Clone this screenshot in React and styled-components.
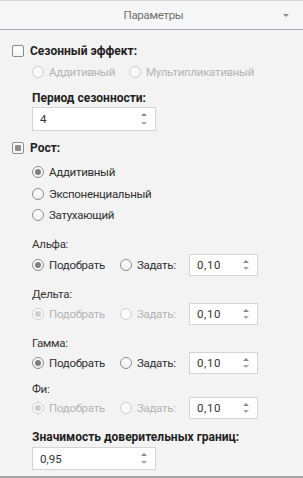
import React from "react";
import styled, { createGlobalStyle, css } from "styled-components";

const Global = createGlobalStyle`
  html, body {
    margin: 0;
    padding: 0;
    background: #f3f3f3;
  }
  body {
    font-family: Roboto, "Liberation Sans", Arial, sans-serif;
    font-size: 11.5px;
    letter-spacing: -0.3px;
    color: #333333;
  }
`;

const Panel = styled.div`
  width: 303px;
  height: 478px;
  box-sizing: border-box;
  background: #f3f3f3;
  border-bottom: 2px solid #a6a6a6;
  display: flex;
  flex-direction: column;
`;

const Header = styled.div`
  flex-shrink: 0;
  height: 28px;
  border-top: 1px solid #d6d6d6;
  border-bottom: 1px solid #aaa4bb;
  background: #f6f6f6;
  display: flex;
  align-items: center;
  justify-content: center;
  position: relative;
  color: #707070;
  padding-left: 4px;
`;

const HeaderArrow = styled.span`
  position: absolute;
  right: 14px;
  top: 13px;
  width: 0;
  height: 0;
  border-left: 3px solid transparent;
  border-right: 3px solid transparent;
  border-top: 3px solid #8a8a8a;
`;

const Body = styled.div`
  display: flex;
  flex-direction: column;
  padding: 11px 0 0 12px;
`;

const CheckRow = styled.label`
  display: flex;
  align-items: center;
  gap: 6px;
  height: 20px;
  font-size: 12px;
  letter-spacing: 0;
  font-weight: 700;
  color: #1f1f1f;
  margin-top: ${(p) => p.$top || 0}px;
`;

const Box = styled.span`
  width: 10px;
  height: 10px;
  border: 1px solid #8c8c8c;
  border-radius: 2px;
  background: linear-gradient(#ffffff, #f4f4f4);
  display: flex;
  align-items: center;
  justify-content: center;
  ${(p) =>
    p.$mixed &&
    css`
      &::after {
        content: "";
        width: 6px;
        height: 6px;
        border-radius: 1px;
        background: #8f8f8f;
      }
    `}
`;

const Indent = styled.div`
  display: flex;
  flex-direction: column;
  padding-left: 20px;
`;

const RadioLine = styled.div`
  display: flex;
  align-items: center;
  height: ${(p) => p.$h || 21}px;
  margin-top: ${(p) => p.$top || 0}px;
`;

const RadioItem = styled.label`
  display: flex;
  align-items: center;
  gap: 5px;
  color: ${(p) => (p.$disabled ? "#b3b3b3" : "#303030")};
  width: ${(p) => (p.$w ? `${p.$w}px` : "auto")};
  flex-shrink: 0;
`;

const Dot = styled.span`
  width: 10px;
  height: 10px;
  border-radius: 50%;
  border: 1px solid ${(p) => (p.$disabled ? "#cfcfcf" : "#8e8e8e")};
  background: ${(p) => (p.$disabled ? "#fafafa" : "linear-gradient(#ffffff, #f0f0f0)")};
  display: flex;
  align-items: center;
  justify-content: center;
  flex-shrink: 0;
  ${(p) =>
    p.$on &&
    css`
      &::after {
        content: "";
        width: 6px;
        height: 6px;
        border-radius: 50%;
        background: ${p.$disabled ? "#cccccc" : "#7f7f7f"};
      }
    `}
`;

const Caption = styled.div`
  height: 16px;
  line-height: 16px;
  font-size: ${(p) => (p.$bold ? "12px" : "inherit")};
  letter-spacing: ${(p) => (p.$bold ? "0" : "inherit")};
  font-weight: ${(p) => (p.$bold ? 700 : 400)};
  color: ${(p) => (p.$bold ? "#1f1f1f" : "#333333")};
  margin-top: ${(p) => p.$top || 0}px;
  margin-bottom: ${(p) => p.$bottom || 0}px;
`;

const Spin = styled.div`
  flex-shrink: 0;
  width: ${(p) => p.$w}px;
  height: ${(p) => p.$h || 22}px;
  box-sizing: border-box;
  border: 1px solid #d4d4d4;
  background: #ffffff;
  display: flex;
  align-items: center;
  padding-left: 7px;
  position: relative;
  color: #333333;
  letter-spacing: ${(p) => (p.$spaced ? "0.6px" : "0")};
`;

const Arrows = styled.span`
  position: absolute;
  right: 8px;
  top: 5px;
  bottom: 5px;
  display: flex;
  flex-direction: column;
  justify-content: space-between;
  &::before,
  &::after {
    content: "";
    width: 0;
    height: 0;
    border-left: 3px solid transparent;
    border-right: 3px solid transparent;
  }
  &::before {
    border-bottom: 3px solid #8a8a8a;
  }
  &::after {
    border-top: 3px solid #a8a8a8;
  }
`;

const ParamRow = styled.div`
  display: flex;
  align-items: center;
  height: 22px;
  margin-top: ${(p) => p.$top}px;
`;

function Radio({ on, disabled, label, w }) {
  return (
    <RadioItem $disabled={disabled} $w={w}>
      <Dot $on={on} $disabled={disabled} />
      {label}
    </RadioItem>
  );
}

function Param({ name, disabled, top, gap }) {
  return (
    <>
      <Caption $top={top}>{name}</Caption>
      <ParamRow $top={gap}>
        <Radio on disabled={disabled} label="Подобрать" w={88} />
        <Radio disabled={disabled} label="Задать:" w={69} />
        <Spin $w={69} $spaced>
          0,10
          <Arrows />
        </Spin>
      </ParamRow>
    </>
  );
}

export default function App() {
  return (
    <>
      <Global />
      <Panel>
        <Header>
          Параметры
          <HeaderArrow />
        </Header>
        <Body>
          <CheckRow>
            <Box />
            Сезонный эффект:
          </CheckRow>
          <Indent>
            <RadioLine $h={22}>
              <Radio disabled label="Аддитивный" w={97} />
              <Radio disabled label="Мультипликативный" />
            </RadioLine>
            <Caption $bold $top={7} $bottom={1}>
              Период сезонности:
            </Caption>
            <Spin $w={124} $h={24}>
              4
              <Arrows />
            </Spin>
          </Indent>
          <CheckRow $top={7}>
            <Box $mixed />
            Рост:
          </CheckRow>
          <Indent>
            <RadioLine $h={22} $top={3}>
              <Radio on label="Аддитивный" />
            </RadioLine>
            <RadioLine>
              <Radio label="Экспоненциальный" />
            </RadioLine>
            <RadioLine $h={22}>
              <Radio label="Затухающий" />
            </RadioLine>
            <Param name="Альфа:" top={10} gap={2} />
            <Param name="Дельта:" disabled top={10} gap={1} />
            <Param name="Гамма:" top={10} gap={1} />
            <Param name="Фи:" disabled top={7} gap={0} />
            <Caption $bold $top={10} $bottom={2}>
              Значимость доверительных границ:
            </Caption>
            <Spin $w={124} $h={23}>
              0,95
              <Arrows />
            </Spin>
          </Indent>
        </Body>
      </Panel>
    </>
  );
}
